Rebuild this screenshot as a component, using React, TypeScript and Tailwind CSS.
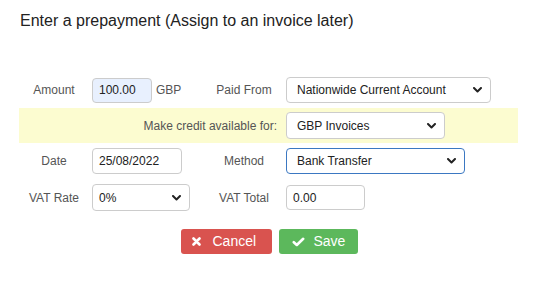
import React from "react";

const Chevron = () => (
  <svg width="9" height="6" viewBox="0 0 9 6" className="absolute right-[8px] top-1/2 -translate-y-1/2 pointer-events-none">
    <path d="M1 1 L4.5 4.5 L8 1" stroke="#222" strokeWidth="2" fill="none" strokeLinecap="round" strokeLinejoin="round" />
  </svg>
);

function Select({ value, w, h, pl, focus }: { value: string; w: string; h: string; pl: string; focus?: boolean }) {
  return (
    <div className={`relative ${w} ${h} rounded-[4px] border bg-white ${focus ? "border-[#3b78c2]" : "border-[#cccccc]"}`}>
      <div className={`flex h-full items-center ${pl} text-[12px] text-[#222]`}>{value}</div>
      <Chevron />
    </div>
  );
}

function Input({ value, w, h, bg }: { value: string; w: string; h: string; bg?: string }) {
  return (
    <div className={`${w} ${h} rounded-[4px] border border-[#cccccc] ${bg ?? "bg-white"} flex items-center pl-[6px] text-[12px] text-[#222]`}>
      {value}
    </div>
  );
}

export default function App() {
  return (
    <div className="w-[537px] h-[284px] bg-white text-[#333]" style={{ fontFamily: '"Liberation Sans", Arial, sans-serif' }}>
      <div className="pl-[20px] pt-[10px] h-[72px] text-[16px] leading-[22px] text-[#222]">
        Enter a prepayment (Assign to an invoice later)
      </div>
      <div className="ml-[19px] w-[499px] text-[12px] text-[#555]">
        {/* Row 1 */}
        <div className="flex h-[36px] items-center">
          <div className="w-[70px] text-center">Amount</div>
          <div className="w-[113px] pl-[3px] flex items-center gap-[4px]">
            <Input value="100.00" w="w-[60px]" h="h-[25px]" bg="bg-[#e8f0fe]" />
            <span>GBP</span>
          </div>
          <div className="w-[84px] text-center">Paid From</div>
          <Select value="Nationwide Current Account" w="w-[205px]" h="h-[26px]" pl="pl-[10px]" />
        </div>
        {/* Yellow row */}
        <div className="flex h-[35px] items-center bg-[#fcfcd0]">
          <div className="w-[258px] text-right">Make credit available for:</div>
          <div className="w-[9px]" />
          <Select value="GBP Invoices" w="w-[159px]" h="h-[27px]" pl="pl-[10px]" />
        </div>
        {/* Date row */}
        <div className="flex h-[36px] items-center">
          <div className="w-[70px] text-center">Date</div>
          <div className="w-[113px] pl-[3px]">
            <Input value="25/08/2022" w="w-[90px]" h="h-[26px]" />
          </div>
          <div className="w-[84px] text-center">Method</div>
          <Select value="Bank Transfer" w="w-[179px]" h="h-[26px]" pl="pl-[10px]" focus />
        </div>
        {/* VAT row */}
        <div className="flex h-[37px] items-center">
          <div className="w-[70px] text-center">VAT Rate</div>
          <div className="w-[113px] pl-[3px]">
            <Select value="0%" w="w-[98px]" h="h-[27px]" pl="pl-[6px]" />
          </div>
          <div className="w-[84px] text-center">VAT Total</div>
          <Input value="0.00" w="w-[79px]" h="h-[25px]" />
        </div>
      </div>
      <div className="mt-[13px] flex justify-center gap-[7px] pl-[1px]">
        <button className="flex h-[25px] w-[91px] items-center rounded-[3px] bg-[#d9534f] pl-[11px] text-[14px] text-white">
          <svg width="9" height="9" viewBox="0 0 9 9">
            <path d="M1.5 1.5 L7.5 7.5 M7.5 1.5 L1.5 7.5" stroke="white" strokeWidth="2.6" strokeLinecap="round" />
          </svg>
          <span className="ml-[12px]">Cancel</span>
        </button>
        <button className="flex h-[25px] w-[79px] items-center rounded-[3px] bg-[#5cb85c] pl-[13px] text-[14px] text-white">
          <svg width="13" height="10" viewBox="0 0 13 10">
            <path d="M1.8 5.2 L4.8 8 L11.2 1.8" stroke="white" strokeWidth="2.6" fill="none" strokeLinecap="round" strokeLinejoin="round" />
          </svg>
          <span className="ml-[9px]">Save</span>
        </button>
      </div>
    </div>
  );
}
